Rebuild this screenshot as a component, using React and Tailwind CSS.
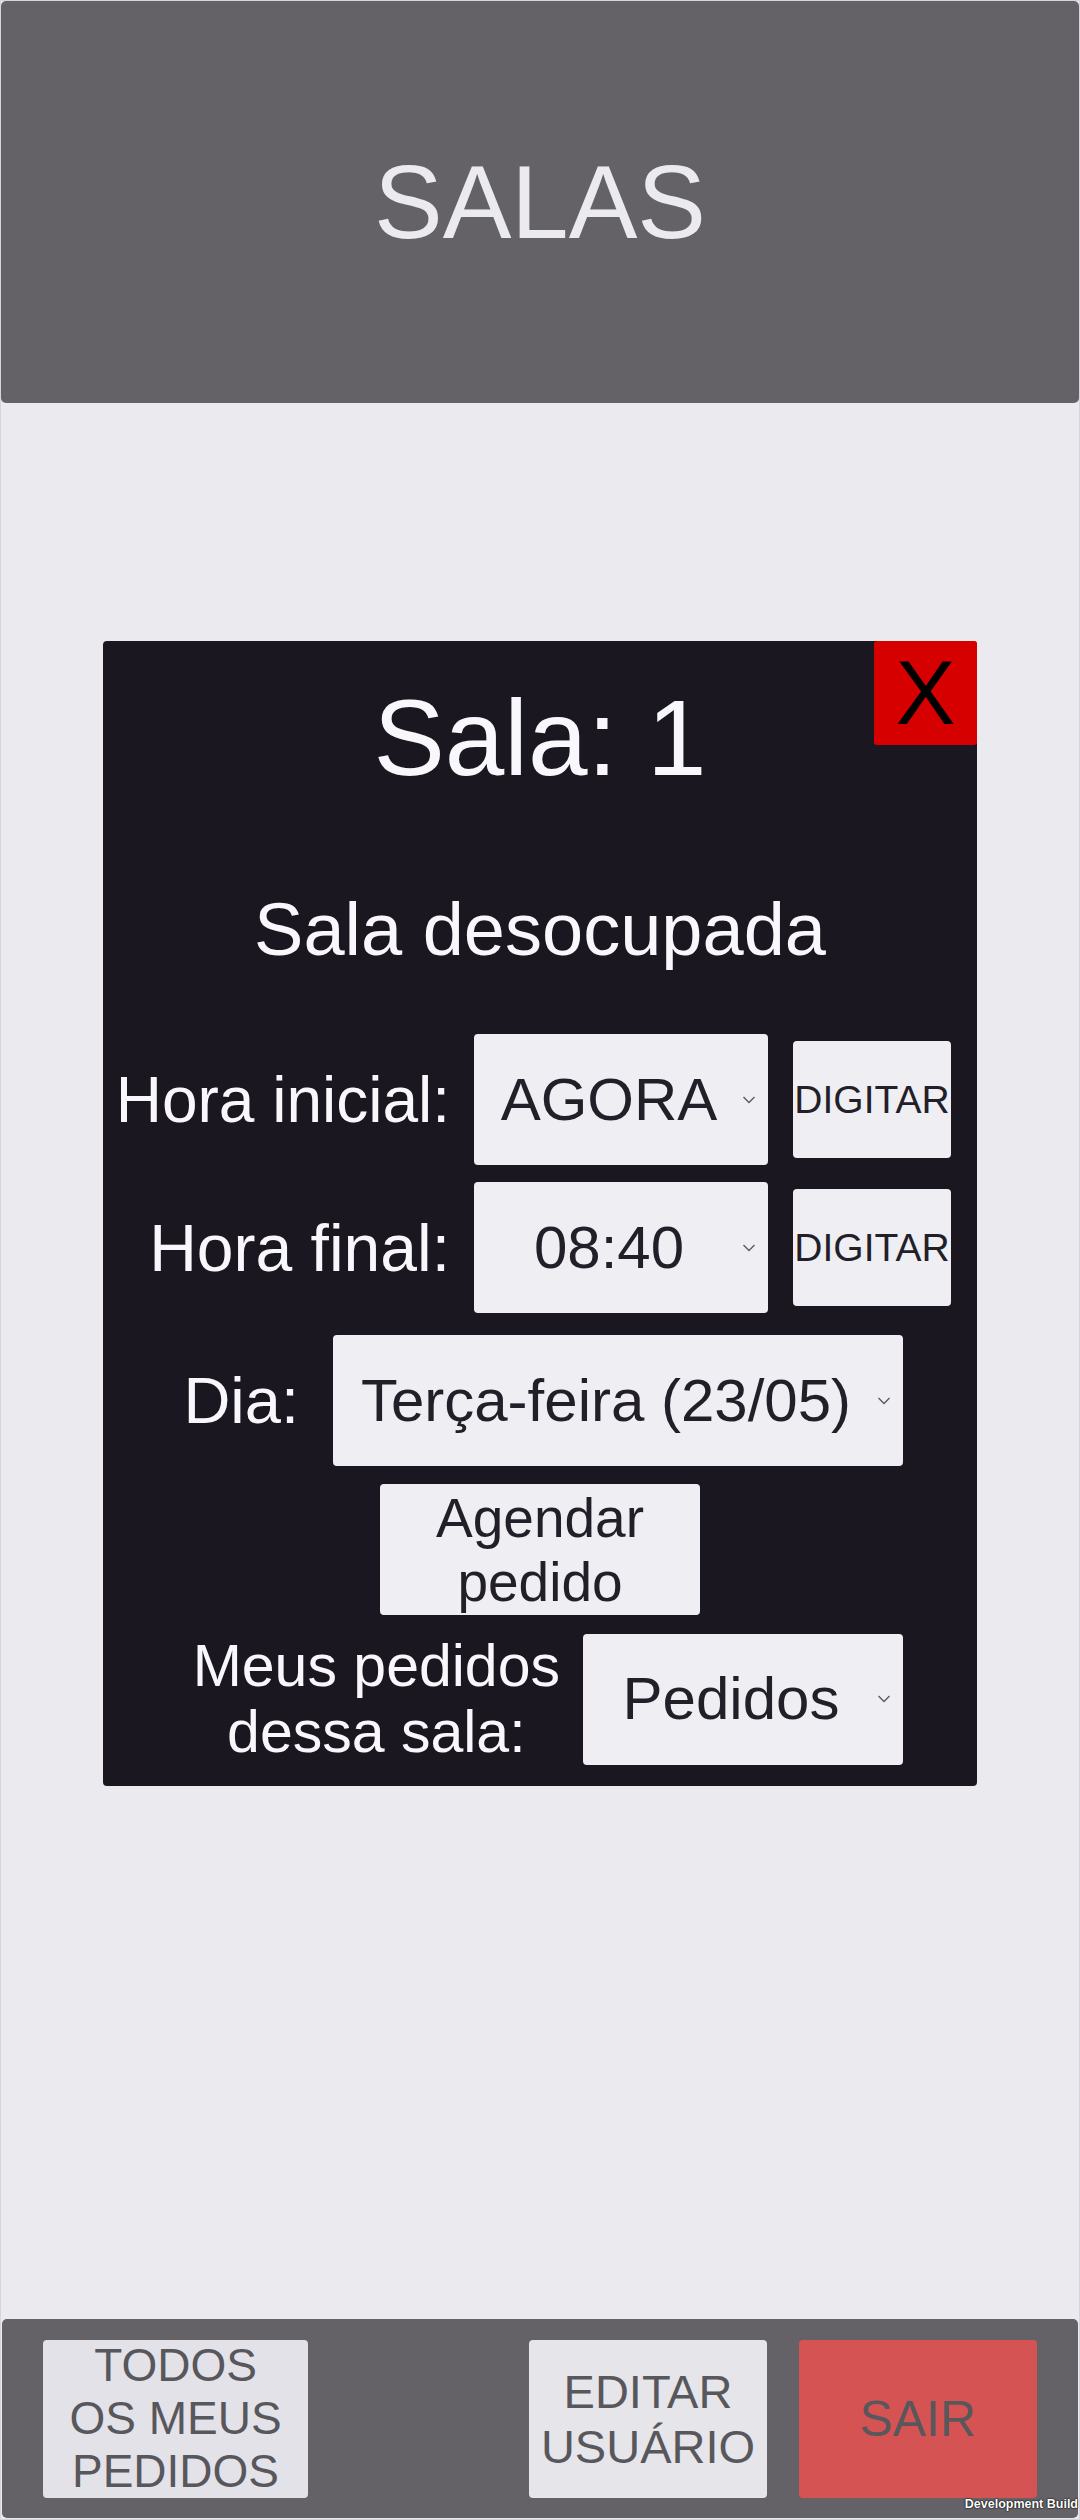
import { useState } from "react";

function Chevron() {
  return (
    <svg
      className="absolute right-[12px] top-1/2 -translate-y-1/2 w-[14px] h-[9px]"
      viewBox="0 0 14 9"
      fill="none"
      stroke="#5d5c62"
      strokeWidth="1.4"
    >
      <polyline points="1.5,1.5 7,7 12.5,1.5" />
    </svg>
  );
}

function Dropdown({ value, className }) {
  return (
    <div
      className={`relative shrink-0 h-[131px] bg-[#efeef3] rounded-[4px] flex items-center justify-center pr-[24px] text-[#221f29] text-[60px] leading-none whitespace-nowrap ${className}`}
    >
      {value}
      <Chevron />
    </div>
  );
}

function DigitarButton() {
  return (
    <button className="shrink-0 w-[158px] h-[117px] bg-[#efeef3] rounded-[4px] flex items-center justify-center text-[#221f29] text-[39px] leading-none whitespace-nowrap">
      DIGITAR
    </button>
  );
}

export default function App() {
  const [open, setOpen] = useState(true);

  return (
    <div className="w-[1080px] h-[2520px] bg-[#ebeaef] border border-[#d6d5db] flex flex-col relative font-['Liberation_Sans',Arial,sans-serif]">
      {/* Header */}
      <div className="h-[402px] bg-[#646267] rounded-[5px] flex items-center justify-center">
        <h1 className="text-[103px] leading-none text-[#ebeaef]">SALAS</h1>
      </div>

      {/* Room panel */}
      <div className="flex-1">
        {open && (
          <div className="relative mt-[238px] ml-[102px] w-[874px] bg-[#1b1720] rounded-[4px] pt-[45px] pb-[21px] flex flex-col">
            <button
              onClick={() => setOpen(false)}
              className="absolute top-0 right-0 w-[103px] h-[104px] bg-[#d70000] rounded-[3px] flex items-center justify-center text-black text-[90px] leading-none"
            >
              X
            </button>

            <div className="text-center text-[107px] leading-[105px] text-[#f8f8fc]">
              Sala: 1
            </div>
            <div className="mt-[103px] text-center text-[74px] leading-[72px] text-[#f8f8fc]">
              Sala desocupada
            </div>

            <div className="mt-[68px] flex items-center justify-end pr-[26px]">
              <span className="text-[64px] leading-none text-[#f8f8fc] whitespace-nowrap">
                Hora inicial:
              </span>
              <Dropdown value="AGORA" className="ml-[24px] w-[294px]" />
              <div className="ml-[25px]">
                <DigitarButton />
              </div>
            </div>

            <div className="mt-[17px] flex items-center justify-end pr-[26px]">
              <span className="text-[66px] leading-none text-[#f8f8fc] whitespace-nowrap">
                Hora final:
              </span>
              <Dropdown value="08:40" className="ml-[24px] w-[294px]" />
              <div className="ml-[25px]">
                <DigitarButton />
              </div>
            </div>

            <div className="mt-[22px] flex items-center justify-end pr-[74px]">
              <span className="text-[65px] leading-none text-[#f8f8fc] whitespace-nowrap">
                Dia:
              </span>
              <Dropdown
                value="Terça-feira (23/05)"
                className="ml-[34px] w-[570px] text-[59px]"
              />
            </div>

            <div className="mt-[18px] flex justify-center">
              <button className="w-[320px] h-[131px] bg-[#efeef3] rounded-[4px] flex items-center justify-center text-center text-[#221f29] text-[55px] leading-[64px]">
                Agendar
                <br />
                pedido
              </button>
            </div>

            <div className="mt-[18px] flex items-center justify-end pr-[74px]">
              <span className="text-center text-[59px] leading-[66px] text-[#f8f8fc] whitespace-nowrap">
                Meus pedidos
                <br />
                dessa sala:
              </span>
              <Dropdown
                value="Pedidos"
                className="ml-[23px] w-[320px] h-[130px] text-[59px]"
              />
            </div>
          </div>
        )}
      </div>

      {/* Bottom bar */}
      <div className="mx-[1px] mb-[1px] h-[199px] bg-[#646267] rounded-[5px] flex items-center px-[41px]">
        <button className="w-[265px] h-[158px] bg-[#e3e2e9] rounded-[4px] flex items-center justify-center text-center text-[#58575c] text-[46px] leading-[53px]">
          TODOS
          <br />
          OS MEUS
          <br />
          PEDIDOS
        </button>
        <button className="ml-auto w-[238px] h-[158px] bg-[#e6e5ea] rounded-[4px] flex items-center justify-center text-center text-[#58575c] text-[47px] leading-[55px]">
          EDITAR
          <br />
          USUÁRIO
        </button>
        <button className="ml-[32px] w-[238px] h-[158px] bg-[#d55353] rounded-[4px] flex items-center justify-center text-[#58575c] text-[50px] leading-none">
          SAIR
        </button>
      </div>

      <span className="absolute right-[1px] bottom-[9px] text-[12.5px] font-bold leading-none text-white [text-shadow:0_0_2px_#000,0_0_1px_#000]">
        Development Build
      </span>
    </div>
  );
}
